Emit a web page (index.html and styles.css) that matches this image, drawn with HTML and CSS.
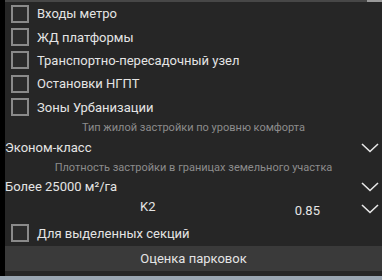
FILE: index.html
```html
<!DOCTYPE html>
<html>
<head>
    <meta charset="UTF-8" />
    <title>Парковки</title>
    <link rel="stylesheet" href="styles.css">
</head>
<body>

<div class="frame">
  <div class="edge"></div>
  <div class="panel">
    <div class="topbar"><div class="track"></div><div class="thumb"></div></div>

    <label class="check"><span class="box"></span>Входы метро</label>
    <label class="check"><span class="box"></span>ЖД платформы</label>
    <label class="check"><span class="box"></span>Транспортно-пересадочный узел</label>
    <label class="check"><span class="box"></span>Остановки НГПТ</label>
    <label class="check"><span class="box"></span>Зоны Урбанизации</label>

    <div class="caption">Тип жилой застройки по уровню комфорта</div>
    <div class="combo first">
      <span class="value">Эконом-класс</span>
      <svg class="chev" viewBox="0 0 18 10"><path d="M1 1 L9 8.5 L17 1"/></svg>
    </div>

    <div class="caption">Плотность застройки в границах земельного участка</div>
    <div class="combo">
      <span class="value">Более 25000 м²/га</span>
      <svg class="chev" viewBox="0 0 18 10"><path d="M1 1 L9 8.5 L17 1"/></svg>
    </div>

    <div class="combo factor">
      <span class="name">K2</span>
      <span class="num">0.85</span>
      <svg class="chev" viewBox="0 0 18 10"><path d="M1 1 L9 8.5 L17 1"/></svg>
    </div>

    <label class="check last"><span class="box"></span>Для выделенных секций</label>

    <div class="button">Оценка парковок</div>
  </div>
</div>
<div class="status"></div>

</body>
</html>
```

FILE: styles.css
```css
* {
  box-sizing: border-box;
}

body {
  margin: 0;
  background: #262626;
  font-family: Roboto, "Noto Sans", sans-serif;
  font-size: 13px;
  color: #e4e4e4;
}

/* whole window without the status strip */
.frame {
  display: flex;
  height: 276px;
}

.edge {
  width: 5px;
  background: #000;
}

.panel {
  flex: 1;
  background: #262626;
  display: flex;
  flex-direction: column;
}

/* thin scroll strip at the top */
.topbar {
  display: flex;
  height: 2px;
}

.topbar .track {
  flex: 1;
  background: #474747;
}

.topbar .thumb {
  width: 15px;
  background: #9a9a9a;
}

/* checkbox rows */
.check {
  display: flex;
  align-items: center;
  height: 23.4px;
  padding-left: 6px;
}

.box {
  width: 18px;
  height: 18px;
  border: 2px solid #8a8a8a;
  background: #2b2b2b;
  margin-right: 8px;
}

.caption {
  height: 18px;
  line-height: 18px;
  text-align: center;
  font-size: 11px;
  color: #8c8c8c;
}

.combo {
  display: flex;
  align-items: center;
  height: 20px;
}

.combo.first {
  height: 22px;
}

.combo .value {
  flex: 1;
}

.chev {
  width: 18px;
  height: 10px;
  margin-right: 3px;
}

.chev path {
  fill: none;
  stroke: #e8e8e8;
  stroke-width: 1.6;
}

.factor {
  height: 24px;
}

.factor .name {
  width: 170px;
  padding-left: 135px;
  padding-bottom: 4px;
}

.factor .num {
  flex: 1;
  text-align: right;
  padding-right: 41px;
  padding-top: 4px;
}

.check.last {
  height: 25px;
}

.button {
  height: 25px;
  line-height: 25px;
  background: #3a3a3a;
  text-align: center;
}

.status {
  height: 4px;
  background: #9aa6b2;
}
```
